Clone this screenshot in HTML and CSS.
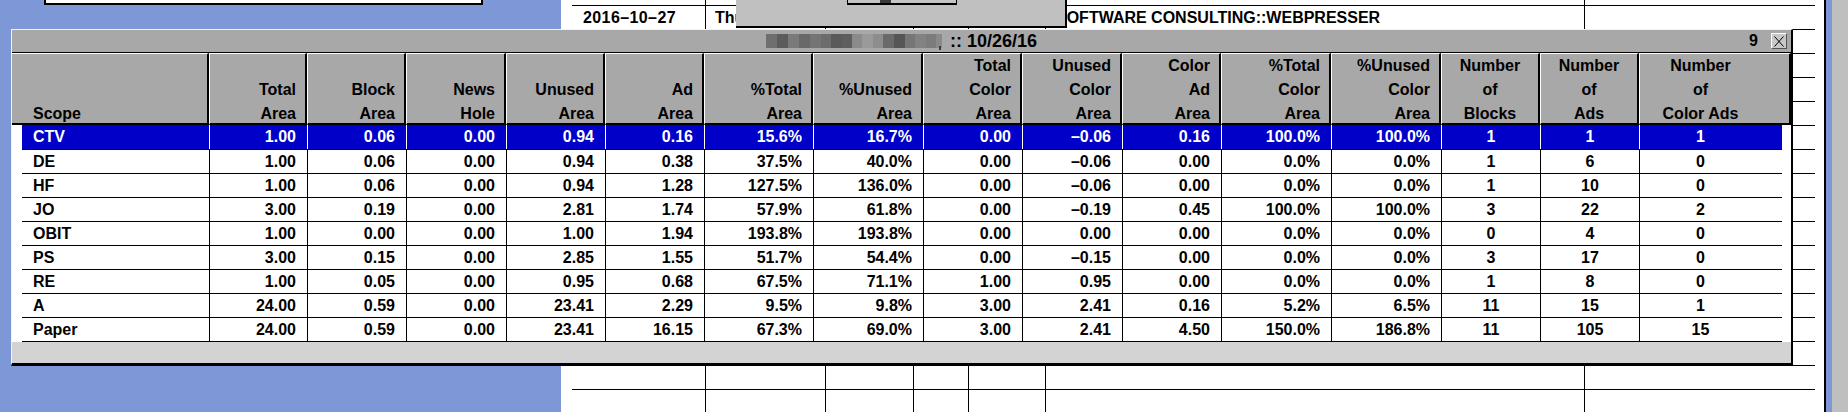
FILE: index.html
```html
<!DOCTYPE html>
<html>
<head>
<meta charset="utf-8">
<title>Scope report</title>
<link rel="stylesheet" href="styles.css">
</head>
<body>
<div class="desk">
  <div class="topbox"></div>

  <div class="sheet">
    <div class="srow"><div></div><div></div><div></div><div></div><div></div><div></div><div></div></div>
    <div class="srow"><div class="st1">2016–10–27</div><div class="st2">Thu</div><div></div><div></div><div></div><div class="st6">SOFTWARE CONSULTING::WEBPRESSER</div><div></div></div>
    <div class="srow"><div></div><div></div><div></div><div></div><div></div><div></div><div></div></div>
    <div class="srow"><div></div><div></div><div></div><div></div><div></div><div></div><div></div></div>
    <div class="srow"><div></div><div></div><div></div><div></div><div></div><div></div><div></div></div>
    <div class="srow"><div></div><div></div><div></div><div></div><div></div><div></div><div></div></div>
    <div class="srow"><div></div><div></div><div></div><div></div><div></div><div></div><div></div></div>
    <div class="srow"><div></div><div></div><div></div><div></div><div></div><div></div><div></div></div>
    <div class="srow"><div></div><div></div><div></div><div></div><div></div><div></div><div></div></div>
    <div class="srow"><div></div><div></div><div></div><div></div><div></div><div></div><div></div></div>
    <div class="srow"><div></div><div></div><div></div><div></div><div></div><div></div><div></div></div>
    <div class="srow"><div></div><div></div><div></div><div></div><div></div><div></div><div></div></div>
    <div class="srow"><div></div><div></div><div></div><div></div><div></div><div></div><div></div></div>
    <div class="srow"><div></div><div></div><div></div><div></div><div></div><div></div><div></div></div>
    <div class="srow"><div></div><div></div><div></div><div></div><div></div><div></div><div></div></div>
    <div class="srow"><div></div><div></div><div></div><div></div><div></div><div></div><div></div></div>
    <div class="srow"><div></div><div></div><div></div><div></div><div></div><div></div><div></div></div>
    <div class="srow"><div></div><div></div><div></div><div></div><div></div><div></div><div></div></div>
    <div class="srow"><div></div><div></div><div></div><div></div><div></div><div></div><div></div></div>
  </div>

  <div class="popup"><div class="pbtn"><span class="pmark"></span></div></div>

  <div class="rpanel"></div>

  <div class="dialog">
    <div class="titlebar">
      <div></div>
      <div class="title"><span class="mosaic"></span><span class="tick"></span><span class="ttext">:: 10/26/16</span></div>
      <div class="tright"><span class="count">9</span><span class="close"><svg width="14" height="14" viewBox="0 0 14 14"><path d="M2.5 2.5 L11.5 12.5 M11.5 2.5 L2.5 12.5" stroke="#000" stroke-width="1" fill="none"/></svg></span></div>
    </div>

    <div class="thead">
      <div class="hc l first">&nbsp;<br>&nbsp;<br>Scope</div>
      <div class="hc">&nbsp;<br>Total<br>Area</div>
      <div class="hc">&nbsp;<br>Block<br>Area</div>
      <div class="hc">&nbsp;<br>News<br>Hole</div>
      <div class="hc">&nbsp;<br>Unused<br>Area</div>
      <div class="hc">&nbsp;<br>Ad<br>Area</div>
      <div class="hc">&nbsp;<br>%Total<br>Area</div>
      <div class="hc">&nbsp;<br>%Unused<br>Area</div>
      <div class="hc">Total<br>Color<br>Area</div>
      <div class="hc">Unused<br>Color<br>Area</div>
      <div class="hc">Color<br>Ad<br>Area</div>
      <div class="hc">%Total<br>Color<br>Area</div>
      <div class="hc">%Unused<br>Color<br>Area</div>
      <div class="hc c">Number<br>of<br>Blocks</div>
      <div class="hc c">Number<br>of<br>Ads</div>
      <div class="hc c last">Number<br>of<br>Color Ads</div>
    </div>

    <div class="tbody">
      <div class="row sel"><div class="l">CTV</div><div>1.00</div><div>0.06</div><div>0.00</div><div>0.94</div><div>0.16</div><div>15.6%</div><div>16.7%</div><div>0.00</div><div>–0.06</div><div>0.16</div><div>100.0%</div><div>100.0%</div><div class="c">1</div><div class="c">1</div><div class="c last">1</div></div>
      <div class="row"><div class="l">DE</div><div>1.00</div><div>0.06</div><div>0.00</div><div>0.94</div><div>0.38</div><div>37.5%</div><div>40.0%</div><div>0.00</div><div>–0.06</div><div>0.00</div><div>0.0%</div><div>0.0%</div><div class="c">1</div><div class="c">6</div><div class="c last">0</div></div>
      <div class="row"><div class="l">HF</div><div>1.00</div><div>0.06</div><div>0.00</div><div>0.94</div><div>1.28</div><div>127.5%</div><div>136.0%</div><div>0.00</div><div>–0.06</div><div>0.00</div><div>0.0%</div><div>0.0%</div><div class="c">1</div><div class="c">10</div><div class="c last">0</div></div>
      <div class="row"><div class="l">JO</div><div>3.00</div><div>0.19</div><div>0.00</div><div>2.81</div><div>1.74</div><div>57.9%</div><div>61.8%</div><div>0.00</div><div>–0.19</div><div>0.45</div><div>100.0%</div><div>100.0%</div><div class="c">3</div><div class="c">22</div><div class="c last">2</div></div>
      <div class="row"><div class="l">OBIT</div><div>1.00</div><div>0.00</div><div>0.00</div><div>1.00</div><div>1.94</div><div>193.8%</div><div>193.8%</div><div>0.00</div><div>0.00</div><div>0.00</div><div>0.0%</div><div>0.0%</div><div class="c">0</div><div class="c">4</div><div class="c last">0</div></div>
      <div class="row"><div class="l">PS</div><div>3.00</div><div>0.15</div><div>0.00</div><div>2.85</div><div>1.55</div><div>51.7%</div><div>54.4%</div><div>0.00</div><div>–0.15</div><div>0.00</div><div>0.0%</div><div>0.0%</div><div class="c">3</div><div class="c">17</div><div class="c last">0</div></div>
      <div class="row"><div class="l">RE</div><div>1.00</div><div>0.05</div><div>0.00</div><div>0.95</div><div>0.68</div><div>67.5%</div><div>71.1%</div><div>1.00</div><div>0.95</div><div>0.00</div><div>0.0%</div><div>0.0%</div><div class="c">1</div><div class="c">8</div><div class="c last">0</div></div>
      <div class="row"><div class="l">A</div><div>24.00</div><div>0.59</div><div>0.00</div><div>23.41</div><div>2.29</div><div>9.5%</div><div>9.8%</div><div>3.00</div><div>2.41</div><div>0.16</div><div>5.2%</div><div>6.5%</div><div class="c">11</div><div class="c">15</div><div class="c last">1</div></div>
      <div class="row"><div class="l">Paper</div><div>24.00</div><div>0.59</div><div>0.00</div><div>23.41</div><div>16.15</div><div>67.3%</div><div>69.0%</div><div>3.00</div><div>2.41</div><div>4.50</div><div>150.0%</div><div>186.8%</div><div class="c">11</div><div class="c">105</div><div class="c last">15</div></div>
    </div>

    <div class="footer"></div>
  </div>
</div>
</body>
</html>
```

FILE: styles.css
```css
html, body {
  margin: 0;
  padding: 0;
}

body {
  background: #7d97d7;
  overflow: hidden;
}

.desk {
  position: relative;
  width: 1848px;
  height: 412px;
  overflow: hidden;
  font: bold 16px "Liberation Sans", Arial, sans-serif;
  color: #000;
}

/* window peeking in at top-left */
.topbox {
  position: absolute;
  left: 44px;
  top: -20px;
  width: 439px;
  height: 25px;
  box-sizing: border-box;
  background: #fff;
  border: 2px solid #000;
}

/* spreadsheet window behind the dialog */
.sheet {
  position: absolute;
  left: 561px;
  top: 0;
  width: 1265px;
  height: 412px;
  box-sizing: border-box;
  background: #fff;
  border-right: 2px solid #000;
  overflow: hidden;
}

.srow {
  display: grid;
  grid-template-columns: 133px 120px 88px 55px 77px 539px 231px;
  width: 1243px;
  height: 24px;
  box-sizing: border-box;
  margin-left: 11px;
  border-bottom: 1px solid #000;
  line-height: 23px;
  white-space: nowrap;
}

.srow:first-child {
  margin-top: -18px;
}

.srow > div {
  overflow: hidden;
}

.srow > div + div {
  border-left: 1px solid #000;
}

.st1 { padding-left: 11px; letter-spacing: 0.4px; }
.st2 { padding-left: 9px; }
.st6 { padding-left: 10px; }

/* small dialog over the spreadsheet */
.popup {
  position: absolute;
  left: 736px;
  top: -40px;
  width: 331px;
  height: 68px;
  box-sizing: border-box;
  background: #c0c0c0;
  border-right: 2px solid #000;
  border-bottom: 2px solid #000;
}

.pbtn {
  width: 110px;
  height: 45px;
  margin-left: 111px;
  box-sizing: border-box;
  background: #c6c6c6;
  border: 1px solid #000;
  border-bottom-width: 2px;
  padding-top: 39px;
  padding-left: 32px;
}

.pmark {
  display: block;
  width: 11px;
  height: 3px;
  background: #3a3a3a;
}

.rpanel {
  position: absolute;
  left: 1832px;
  top: 0;
  width: 16px;
  height: 412px;
  background: #bfbfbf;
}

/* report dialog */
.dialog {
  position: absolute;
  left: 11px;
  top: 29px;
  width: 1782px;
  box-sizing: border-box;
  border-top: 1px solid #f2f2f2;
  border-left: 1px solid #f2f2f2;
  border-right: 2px solid #000;
  border-bottom: 3px solid #000;
  background: #fff;
}

.titlebar {
  height: 23px;
  box-sizing: border-box;
  border-bottom: 1px solid #000;
  background: #a8a8a8;
  display: grid;
  grid-template-columns: 1fr auto 1fr;
  align-items: center;
  line-height: 22px;
}

.title {
  display: flex;
  align-items: center;
  font-size: 18px;
}

.mosaic {
  display: block;
  width: 176px;
  height: 14px;
  background: linear-gradient(to right,
    #6f6f6f 0 11px, #5c5c5c 11px 22px, #7a7a7a 22px 33px, #696969 33px 44px,
    #747474 44px 55px, #6c6c6c 55px 65px, #5a5a5a 65px 76px, #5e5e5e 76px 86px,
    #8b8b8b 86px 96px, #9a9a9a 96px 107px, #8d8d8d 107px 117px, #6a6a6a 117px 128px,
    #565656 128px 139px, #767676 139px 149px, #828282 149px 160px, #7c7c7c 160px 170px,
    #8a8a8a 170px 176px);
}

.tick {
  display: block;
  width: 2px;
  height: 4px;
  margin: 16px 0 0 -3px;
  background: #3c3c3c;
  align-self: flex-start;
}

.ttext {
  margin-left: 9px;
}

.tright {
  justify-self: end;
  display: flex;
  align-items: center;
  padding-right: 4px;
  font-size: 16px;
}

.count {
  margin-right: 13px;
}

.close {
  display: flex;
  align-items: center;
  justify-content: center;
  width: 16px;
  height: 16px;
  box-sizing: border-box;
  background: #c8c8c8;
  border-top: 1px solid #fff;
  border-left: 1px solid #fff;
  border-right: 1px solid #555;
  border-bottom: 1px solid #555;
}

.close svg {
  display: block;
}

/* table header */
.thead {
  display: grid;
  grid-template-columns: 197px 98px 99px 100px 99px 99px 109px 110px 99px 100px 99px 110px 110px 99px 99px 152px;
  height: 72px;
}

.hc {
  height: 72px;
  box-sizing: border-box;
  background: #a8a8a8;
  border-top: 1px solid #fff;
  border-left: 1px solid #fff;
  border-right: 2px solid #000;
  border-bottom: 2px solid #000;
  padding-right: 9px;
  text-align: right;
  line-height: 24px;
  white-space: nowrap;
}

.hc.first {
  border-left: 0;
  padding-left: 21px;
  text-align: left;
}

.hc.c {
  text-align: center;
  padding-right: 0;
}

.hc.c.last {
  padding-right: 28px;
}

/* table body */
.tbody {
  padding: 0 9px 0 10px;
  background: #fff;
}

.row {
  display: grid;
  grid-template-columns: 187px 98px 99px 100px 99px 99px 109px 110px 99px 100px 99px 110px 110px 99px 99px 143px;
  height: 24px;
  box-sizing: border-box;
  border-bottom: 1px solid #000;
  line-height: 23px;
}

.row > div {
  padding: 0 11px;
  text-align: right;
  white-space: nowrap;
}

.row > div + div {
  border-left: 1px solid #000;
}

.row > .l {
  text-align: left;
}

.row > .c {
  text-align: center;
  padding: 0;
}

.row > .c.last {
  padding-right: 21px;
}

.row.sel {
  height: 25px;
  background: #0000c8;
  color: #fff;
}

.row.sel > div + div {
  border-left-color: #fff;
}

.footer {
  height: 21px;
  background: #d3d3d3;
}
```
